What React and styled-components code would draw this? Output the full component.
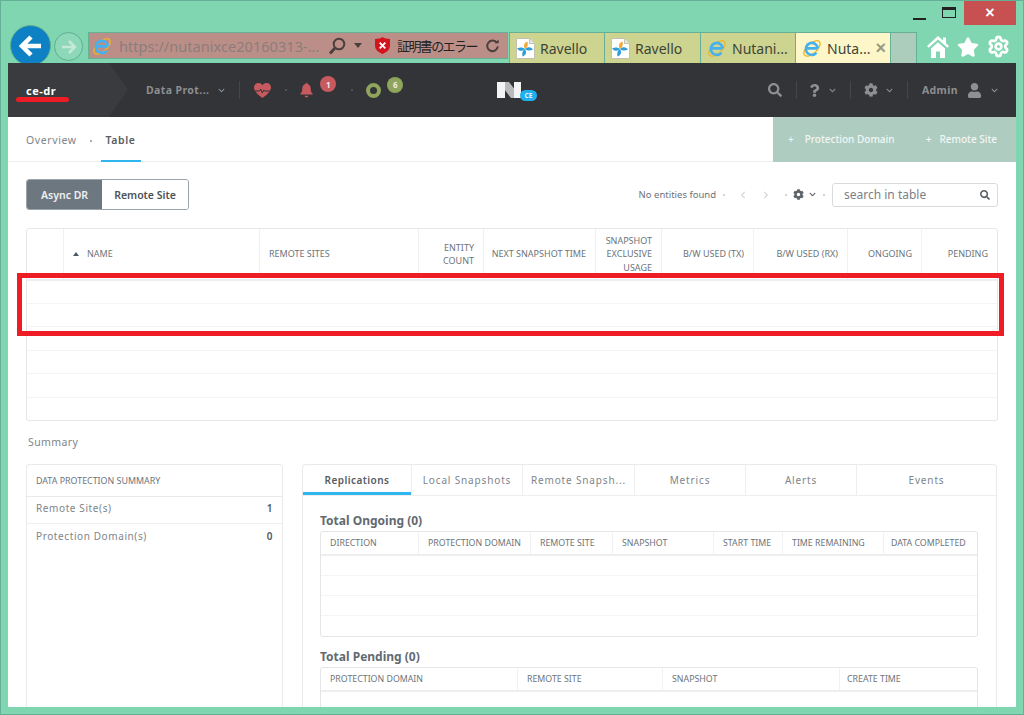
import React from 'react';
import styled, { createGlobalStyle } from 'styled-components';
import { FaStar, FaCog, FaSearch, FaUser, FaQuestion, FaChevronDown, FaChevronLeft, FaChevronRight } from 'react-icons/fa';
import { Settings } from 'lucide-react';

const Global = createGlobalStyle`
  html, body { margin: 0; padding: 0; height: 100%; overflow: hidden; }
  body { font-family: "Noto Sans", "Liberation Sans", "Noto Sans CJK JP", sans-serif; color: #4f5860; }
  * { box-sizing: border-box; }
`;

// icon with a left margin, used everywhere in the bars
const Glyph = styled.svg`
  flex-shrink: 0;
  margin-left: ${p => p.$l || 0}px;
`;

const Chevron = styled(FaChevronDown)`
  flex-shrink: 0;
  margin-left: ${p => p.$l || 0}px;
`;

const PagerLeft = styled(FaChevronLeft)`
  color: #d3d6d8;
  margin-left: 14px;
`;

const PagerRight = styled(FaChevronRight)`
  color: #d3d6d8;
  margin-left: 15px;
`;

const TableCog = styled(FaCog)`
  color: #5c6369;
`;

const TableChevron = styled(Chevron)`
  color: #5c6369;
`;

const IeIcon = ({ size = 20 }) => (
  <Glyph width={size} height={size} viewBox="0 0 24 24">
    <ellipse cx="12" cy="12.5" rx="12" ry="6" transform="rotate(-42 12 12.5)" fill="none" stroke="#f0b429" strokeWidth="1.5" />
    <path d="M5.5 12.5h13M19 12.5a7.2 7.2 0 1 0-1.6 5.2" fill="none" stroke="#45b1ee" strokeWidth="3.2" />
  </Glyph>
);

const RavelloIcon = () => (
  <Glyph width="19" height="21" viewBox="0 0 19 21">
    <path d="M.5.5h13l5 5v15H.5Z" fill="#fff" stroke="#c2c2ae" />
    <path d="M13.5.5v5h5" fill="#e8e8e0" stroke="#c2c2ae" />
    <path d="M9 11C7 7.500 8 5 11.500 3.500c.5 3 .5 5.500-2.500 7.500Z" fill="#f2a93b" />
    <path d="M9 11c3-2.500 5.500-2.500 8 .5-3 1.500-5.500 1.500-8-.5Z" fill="#2f9ed8" />
    <path d="M9 11c2 3.500 1 6-2.500 7.500C6 15.500 6 13 9 11Z" fill="#2f9ed8" />
    <path d="M9 11c-3 2.500-5.500 2.500-8-.5 3-1.500 5.500-1.500 8 .5Z" fill="#2f9ed8" />
  </Glyph>
);

const Window = styled.div`
  width: 1024px;
  height: 715px;
  position: relative;
  background: #80d6b0;
  border: 1px solid #63b096;
  padding: 0 7px 7px;
  display: flex;
  flex-direction: column;
  overflow: hidden;
`;

const TitleBar = styled.div`
  height: 18px;
  display: flex;
  justify-content: flex-end;
  align-items: flex-start;
  flex-shrink: 0;
`;

const WinButton = styled.div`
  width: ${p => (p.$close ? '52px' : '30px')};
  height: ${p => (p.$close ? '24px' : '20px')};
  background: ${p => (p.$close ? '#c75050' : 'transparent')};
  color: #fff;
  display: flex;
  align-items: center;
  justify-content: center;
  font-size: 16px;
  font-weight: 700;
  font-family: "Liberation Sans", sans-serif;
`;

const Minimize = styled.span`
  width: 13px;
  height: 2px;
  background: #222;
  margin-top: 16px;
`;

const Maximize = styled.span`
  width: 14px;
  height: 11px;
  border: 1px solid #222;
  border-top-width: 3px;
  margin-top: 3px;
`;

const ToolBar = styled.div`
  height: 31px;
  margin-top: 13px;
  display: flex;
  align-items: flex-start;
  flex-shrink: 0;
`;

const BackButton = styled.div`
  width: 41px;
  height: 41px;
  margin: -7px 0 0 2px;
  border-radius: 50%;
  background: #0d81c4;
  border: 1px solid #5fae92;
  display: flex;
  align-items: center;
  justify-content: center;
  flex-shrink: 0;
`;

const ForwardButton = styled.div`
  width: 29px;
  height: 29px;
  margin: 0 5px 0 3px;
  border-radius: 50%;
  border: 1px solid #5fae92;
  background: #8cd8b8;
  color: #c5e8d8;
  display: flex;
  align-items: center;
  justify-content: center;
  flex-shrink: 0;
`;

const AddressBar = styled.div`
  width: 420px;
  height: 27px;
  margin-right: 1px;
  padding: 0 3px;
  background: #bb8f88;
  border: 1px solid #66b095;
  display: flex;
  align-items: center;
  flex-shrink: 0;
`;

const UrlText = styled.span`
  font-size: 14.6px;
  color: #8b7d7a;
  margin-left: 7px;
  width: 200px;
  white-space: nowrap;
  overflow: hidden;
  flex-shrink: 0;
`;

const CertText = styled.span`
  font-size: 13px;
  color: #222;
  margin-left: 7px;
  width: 80px;
  white-space: nowrap;
  letter-spacing: -1.6px;
  font-family: "Noto Sans CJK JP", sans-serif;
  flex-shrink: 0;
`;

const Tab = styled.div`
  width: ${p => p.$w}px;
  height: 31px;
  background: ${p => (p.$active ? '#fcf6c8' : '#cdd48f')};
  border: 1px solid #66b095;
  border-left-width: ${p => (p.$first ? '1px' : '0')};
  border-bottom: none;
  padding-left: 6px;
  display: flex;
  align-items: center;
  gap: 5px;
  font-size: 14px;
  color: #3d4438;
  white-space: nowrap;
  flex-shrink: 0;
`;

const TabClose = styled.span`
  color: #9a9a84;
  font-size: 18px;
  font-weight: 700;
  font-family: "Liberation Sans", sans-serif;
`;

const EmptyTab = styled.div`
  width: 26px;
  height: 31px;
  background: #accdbc;
  border: 1px solid #66b095;
  border-left: none;
  border-bottom: none;
  flex-shrink: 0;
`;

const ToolIcons = styled.div`
  display: flex;
  align-items: center;
  gap: 8px;
  margin-left: 10px;
  color: #fff;
  padding-top: 3px;
  flex-shrink: 0;
`;

const Page = styled.div`
  flex: 1;
  min-height: 0;
  background: #fff;
  display: flex;
  flex-direction: column;
  overflow: hidden;
`;

const Header = styled.header`
  height: 54px;
  background: #333437;
  display: grid;
  grid-template-columns: 1fr auto 1fr;
  align-items: center;
  flex-shrink: 0;
  color: #8d8f92;
`;

const HeaderLeft = styled.div`
  display: flex;
  align-items: center;
  height: 100%;
`;

const HeaderRight = styled.div`
  display: flex;
  align-items: center;
  justify-content: flex-end;
  padding-right: 18px;
`;

const Crumb = styled.div`
  width: 120px;
  height: 100%;
  background: #3a3b3e;
  clip-path: polygon(0 0, 101px 0, 120px 50%, 101px 100%, 0 100%);
  color: #fff;
  font-size: 11px;
  font-weight: 700;
  letter-spacing: 0.5px;
  display: flex;
  align-items: center;
  padding: 0 0 0 18px;
  flex-shrink: 0;
`;

const NavItem = styled.div`
  display: flex;
  align-items: center;
  gap: ${p => p.$gap || 8}px;
  margin-left: ${p => p.$l || 0}px;
  font-size: 10.5px;
  font-weight: 700;
  letter-spacing: 0.4px;
  color: #8d8f92;
  white-space: nowrap;
`;

const Divider = styled.span`
  width: 1px;
  height: 18px;
  background: #44464a;
  margin: 0 ${p => p.$r || 14}px 0 14px;
`;

const Dot = styled.span`
  width: 2px;
  height: 2px;
  border-radius: 50%;
  background: #5a5b5e;
  margin: 0 ${p => p.$r || 14}px 0 ${p => p.$m || 14}px;
  flex-shrink: 0;
`;

const Alert = styled.div`
  display: flex;
  align-items: flex-start;
`;

const Badge = styled.span`
  width: 16px;
  height: 16px;
  border-radius: 50%;
  background: ${p => p.$c};
  color: #f2e8e8;
  font-size: 8px;
  font-weight: 700;
  display: flex;
  align-items: center;
  justify-content: center;
  margin: -6px 0 0 6px;
`;

const Ring = styled.span`
  width: 15px;
  height: 15px;
  border-radius: 50%;
  border: 4px solid #8fa45c;
  display: block;
`;

const Logo = styled.div`
  display: flex;
  align-items: center;
  margin-left: 10px;
`;

const CeBadge = styled.span`
  width: 17px;
  height: 11px;
  border-radius: 6px;
  background: #1fb0ee;
  color: #e4f6ff;
  font-size: 6.5px;
  font-weight: 700;
  display: flex;
  align-items: center;
  justify-content: center;
  margin: 11px 0 0 -1px;
`;

const SubNav = styled.div`
  height: 45px;
  border-bottom: 1px solid #eceeef;
  display: flex;
  justify-content: space-between;
  flex-shrink: 0;
  font-size: 10.5px;
`;

const SubTabs = styled.div`
  display: flex;
  align-items: stretch;
  padding-left: 18px;
`;

const SubTab = styled.div`
  display: flex;
  align-items: center;
  padding: 3px ${p => (p.$active ? '5px' : '0')} 0;
  font-weight: ${p => (p.$active ? 600 : 400)};
  letter-spacing: 0.6px;
  color: ${p => (p.$active ? '#585e63' : '#7e858b')};
  border-bottom: 2px solid ${p => (p.$active ? '#2fb6ef' : 'transparent')};
  margin-bottom: -1px;
`;

const SubDot = styled.span`
  width: 2px;
  height: 2px;
  background: #8c9298;
  border-radius: 50%;
  align-self: center;
  margin: 3px 9px 0 13px;
`;

const CreateBar = styled.div`
  width: 243px;
  background: #aeccc0;
  color: #f2f7f5;
  display: flex;
  align-items: center;
  padding: 0 19px 2px 15px;
  justify-content: space-between;
  font-size: 10px;
  font-weight: 500;
  margin-bottom: -1px;
`;

const CreateItem = styled.span`
  display: flex;
  gap: ${p => p.$gap}px;
  white-space: nowrap;
`;

const Content = styled.div`
  flex: 1;
  min-height: 0;
  padding: 17px 18px 0;
  display: flex;
  flex-direction: column;
`;

const ToolRow = styled.div`
  display: flex;
  justify-content: space-between;
  align-items: center;
  height: 31px;
  flex-shrink: 0;
`;

const Toggle = styled.div`
  display: flex;
  height: 31px;
  width: 163px;
  border: 1px solid #9aa3aa;
  border-radius: 3px;
  overflow: hidden;
  font-size: 10.5px;
  font-weight: 600;
`;

const ToggleItem = styled.div`
  flex: ${p => p.$grow};
  display: flex;
  align-items: center;
  justify-content: center;
  background: ${p => (p.$active ? '#6d7780' : '#fff')};
  color: ${p => (p.$active ? '#eef0f2' : '#4d5358')};
`;

const TableTools = styled.div`
  display: flex;
  align-items: center;
  font-size: 9.5px;
  color: #6b7379;
`;

const ToolDot = styled.span`
  width: 2px;
  height: 2px;
  background: #c3c7ca;
  border-radius: 50%;
  margin: 0 ${p => p.$r}px 0 ${p => p.$l}px;
`;

const SearchBox = styled.div`
  width: 166px;
  height: 24px;
  border: 1px solid #d8dbdd;
  border-radius: 3px;
  display: flex;
  align-items: center;
  justify-content: space-between;
  padding: 0 7px 0 11px;
  font-size: 12px;
  color: #7a8188;
`;

const TableCard = styled.div`
  height: 193px;
  margin-top: 18px;
  border: 1px solid #e4e6e8;
  border-radius: 3px;
  flex-shrink: 0;
  overflow: hidden;
`;

const Cols = styled.div`
  display: grid;
  grid-template-columns: ${p => p.$cols};
  height: ${p => p.$h}px;
  border-bottom: 2px solid #eceeef;
`;

const HeadCell = styled.div`
  display: flex;
  align-items: center;
  justify-content: ${p => (p.$right ? 'flex-end' : 'flex-start')};
  text-align: ${p => (p.$right ? 'right' : 'left')};
  gap: 8px;
  padding: 0 9px;
  font-size: 9px;
  line-height: 13.5px;
  color: #6c747a;
  border-right: 1px solid #f0f1f2;
  white-space: pre;
  &:last-child { border-right: none; }
`;

const SortArrow = styled.span`
  width: 0;
  height: 0;
  border-left: 3px solid transparent;
  border-right: 3px solid transparent;
  border-bottom: 4px solid #4f5860;
`;

const BlankRow = styled.div`
  height: ${p => p.$h}px;
  border-bottom: 1px solid #f3f4f5;
  &:last-child { border-bottom: none; }
`;

const SummaryTitle = styled.div`
  margin: 14px 0 0 2px;
  height: 14px;
  font-size: 10.5px;
  letter-spacing: 0.4px;
  color: #7e858b;
  flex-shrink: 0;
`;

const Bottom = styled.div`
  display: grid;
  grid-template-columns: 257px 695px;
  gap: 19px;
  margin-top: 15px;
  flex: 1;
  min-height: 0;
`;

const Panel = styled.section`
  border: 1px solid #e8eaeb;
  border-bottom: none;
  border-radius: 4px 4px 0 0;
  overflow: hidden;
`;

const PanelTitle = styled.div`
  height: 32px;
  padding-left: 9px;
  display: flex;
  align-items: center;
  border-bottom: 1px solid #e8eaeb;
  font-size: 8.9px;
  color: #6c747a;
`;

const StatRow = styled.div`
  height: 27px;
  padding: 0 9px 4px 9px;
  display: flex;
  align-items: center;
  justify-content: space-between;
  border-bottom: ${p => (p.$last ? 'none' : '1px solid #eceeef')};
  font-size: 10px;
  letter-spacing: 0.6px;
  color: #7e858b;
`;

const StatValue = styled.strong`
  color: #4f5860;
  font-weight: 600;
`;

const TabRow = styled.div`
  display: grid;
  grid-template-columns: 109px 111px 112px 111px 111px 1fr;
  height: 31px;
  border-bottom: 1px solid #eceeef;
`;

const PanelTab = styled.div`
  display: flex;
  align-items: center;
  justify-content: center;
  font-size: 10px;
  letter-spacing: ${p => (p.$active ? '0.45px' : '0.85px')};
  font-weight: ${p => (p.$active ? 600 : 400)};
  color: ${p => (p.$active ? '#555c62' : '#7e858b')};
  border-right: 1px solid #eceeef;
  box-shadow: ${p => (p.$active ? 'inset 0 -3px 0 #2fb6ef' : 'none')};
  white-space: nowrap;
  &:last-child { border-right: none; }
`;

const PanelBody = styled.div`
  padding: 16px 18px 0 17px;
`;

const SectionTitle = styled.h3`
  margin: 0;
  height: 19px;
  font-size: 12px;
  line-height: 18px;
  font-weight: 700;
  color: #626a70;
`;

const InnerTable = styled.div`
  border: 1px solid #e4e6e8;
  border-radius: 3px;
  margin-bottom: 11px;
  overflow: hidden;
`;

const InnerHead = styled(HeadCell)`
  padding-top: 2px;
  font-size: 8.8px;
  white-space: nowrap;
  &:last-child { padding-left: 7px; padding-right: 6px; }
`;

const BlankInner = styled.div`
  height: 20px;
  border-bottom: 1px solid #f3f4f5;
  &:last-child { border-bottom: none; }
`;

// the red marks somebody drew on top of the screenshot
const Annotation = styled.div`
  position: absolute;
  left: 16px;
  top: 272px;
  width: 987px;
  height: 63px;
  border: 5px solid #ee1c25;
  pointer-events: none;
`;

const Underline = styled.div`
  position: absolute;
  left: 15px;
  top: 96px;
  width: 53px;
  height: 5px;
  border-radius: 3px;
  background: #ee1c25;
`;

const mainCols = '37px 196px 159px 65px 112px 66px 92px 94px 74px 1fr';
const ongoingCols = '98px 112px 82px 101px 69px 101px 1fr';
const pendingCols = '197px 145px 177px 1fr';

const App = () => {
  return (
    <>
      <Global />
      <Window>
        <TitleBar>
          <WinButton><Minimize /></WinButton>
          <WinButton><Maximize /></WinButton>
          <WinButton $close>×</WinButton>
        </TitleBar>
        <ToolBar>
          <BackButton>
            <svg width="24" height="22" viewBox="0 0 24 22"><path d="M12 2 3 11l9 9M4 11h18" fill="none" stroke="#fff" strokeWidth="4.5" /></svg>
          </BackButton>
          <ForwardButton>
            <svg width="16" height="14" viewBox="0 0 16 14"><path d="M8 1l6 6-6 6M13 7H1" fill="none" stroke="currentColor" strokeWidth="2.6" /></svg>
          </ForwardButton>
          <AddressBar>
            <IeIcon size={20} />
            <UrlText>https://nutanixce20160313-...</UrlText>
            <Glyph $l={9} width="18" height="18" viewBox="0 0 18 18"><circle cx="11" cy="7" r="5.300" fill="none" stroke="#4a3f3c" strokeWidth="2" /><path d="M7 11 2 16.500" stroke="#4a3f3c" strokeWidth="2.800" /></Glyph>
            <Glyph $l={8} width="8" height="5" viewBox="0 0 8 5"><path d="M0 0h8L4 5Z" fill="#4a3f3c" /></Glyph>
            <Glyph $l={13} width="15" height="17" viewBox="0 0 16 18"><path d="M8 0c2 1.500 5 2 8 2v7c0 4-3 7-8 9-5-2-8-5-8-9V2c3 0 6-.5 8-2Z" fill="#d4141c" /><path d="M5 6l6 6M11 6l-6 6" stroke="#fff" strokeWidth="2" /></Glyph>
            <CertText>証明書のエラー</CertText>
            <Glyph $l={8} width="15" height="16" viewBox="0 0 17 17"><path d="M13.500 5a6 6 0 1 0 1 4" fill="none" stroke="#4a3f3c" strokeWidth="2.200" /><path d="M11 5.500h4.500V1Z" fill="#4a3f3c" /></Glyph>
          </AddressBar>
          <Tab $w={96} $first><RavelloIcon />Ravello</Tab>
          <Tab $w={96}><RavelloIcon />Ravello</Tab>
          <Tab $w={95}><IeIcon />Nutani...</Tab>
          <Tab $w={95} $active><IeIcon />Nuta...<TabClose>×</TabClose></Tab>
          <EmptyTab />
          <ToolIcons>
            <svg width="22" height="22" viewBox="0 0 22 22" fill="#fff">
              <path d="M11 0 0 10l1.600 1.800L11 3.400l9.400 8.400L22 10l-3-2.700V1.500h-3v3Z" />
              <path d="M4 12.500 11 6.300l7 6.200V22h-5v-6.500H9V22H4Z" />
            </svg>
            <FaStar size={22} />
            <Settings size={23} strokeWidth={2.8} />
          </ToolIcons>
        </ToolBar>
        <Page>
          <Header>
            <HeaderLeft>
              <Crumb>ce-dr</Crumb>
              <NavItem $l={18}>Data Prot...<Chevron size={7} $l={1} /></NavItem>
              <Divider />
              <svg width="17" height="15" viewBox="0 0 17 15">
                <path d="M8.500 15C3 11 0 8 0 4.500 0 2 2 0 4.500 0 6.200 0 7.600.8 8.500 2.200 9.400.8 10.800 0 12.500 0 15 0 17 2 17 4.500 17 8 14 11 8.500 15Z" fill="#c65a5f" />
                <path d="M.5 8h5l1.200-2 1.600 4 1.400-3 .8 1h6" fill="none" stroke="#333437" strokeWidth="1" />
              </svg>
              <Dot $m={14} $r={12} />
              <Alert>
                <svg width="15" height="16" viewBox="0 0 16 16" fill="#c65a5f">
                  <path d="M8 .5c.8 0 1.200.6 1.200 1.200 2.400.6 3.300 2.600 3.300 5 0 3 1 4.600 2.500 6H1c1.500-1.400 2.500-3 2.500-6 0-2.400.9-4.400 3.300-5C6.800 1.100 7.200.5 8 .5Z" />
                  <path d="M6 14.200h4l-.6 1.600H6.600Z" />
                </svg>
                <Badge $c="#c65a5f">1</Badge>
              </Alert>
              <Dot $m={15} $r={13} />
              <Alert>
                <Ring />
                <Badge $c="#8fa45c">6</Badge>
              </Alert>
            </HeaderLeft>
            <Logo>
              <svg width="24" height="16" viewBox="0 0 24 16">
                <path d="M7 0h5l7 9v7h-5L7 7Z" fill="#b9babb" />
                <path d="M0 0h8v16H0Z" fill="#f4f4f4" />
                <path d="M17 0h7v16h-7Z" fill="#f4f4f4" />
              </svg>
              <CeBadge>CE</CeBadge>
            </Logo>
            <HeaderRight>
              <FaSearch size={14} />
              <Divider $r={11} />
              <NavItem $gap={8}><FaQuestion size={13} /><Chevron size={7} /></NavItem>
              <Divider $r={13} />
              <NavItem><FaCog size={14} /><Chevron size={7} /></NavItem>
              <Divider />
              <NavItem $gap={9}>Admin<FaUser size={15} /><Chevron size={7} /></NavItem>
            </HeaderRight>
          </Header>
          <SubNav>
            <SubTabs>
              <SubTab>Overview</SubTab>
              <SubDot />
              <SubTab $active>Table</SubTab>
            </SubTabs>
            <CreateBar>
              <CreateItem $gap={11}><span>+</span>Protection Domain</CreateItem>
              <CreateItem $gap={8}><span>+</span>Remote Site</CreateItem>
            </CreateBar>
          </SubNav>
          <Content>
            <ToolRow>
              <Toggle>
                <ToggleItem $active $grow={76}>Async DR</ToggleItem>
                <ToggleItem $grow={87}>Remote Site</ToggleItem>
              </Toggle>
              <TableTools>
                No entities found
                <ToolDot $l={7} $r={0} />
                <PagerLeft size={8} />
                <PagerRight size={8} />
                <ToolDot $l={15} $r={6} />
                <TableCog size={11} />
                <TableChevron size={7} $l={5} />
                <ToolDot $l={7} $r={7} />
                <SearchBox>search in table<FaSearch size={10} color="#555c62" /></SearchBox>
              </TableTools>
            </ToolRow>
            <TableCard>
              <Cols $cols={mainCols} $h={52}>
                <HeadCell />
                <HeadCell><SortArrow />NAME</HeadCell>
                <HeadCell>REMOTE SITES</HeadCell>
                <HeadCell $right>{'ENTITY\nCOUNT'}</HeadCell>
                <HeadCell $right>NEXT SNAPSHOT TIME</HeadCell>
                <HeadCell $right>{'SNAPSHOT\nEXCLUSIVE\nUSAGE'}</HeadCell>
                <HeadCell $right>B/W USED (TX)</HeadCell>
                <HeadCell $right>B/W USED (RX)</HeadCell>
                <HeadCell $right>ONGOING</HeadCell>
                <HeadCell $right>PENDING</HeadCell>
              </Cols>
              {[23, 23, 24, 23, 24, 23].map((h, i) => <BlankRow key={i} $h={h} />)}
            </TableCard>
            <SummaryTitle>Summary</SummaryTitle>
            <Bottom>
              <Panel>
                <PanelTitle>DATA PROTECTION SUMMARY</PanelTitle>
                <StatRow>Remote Site(s)<StatValue>1</StatValue></StatRow>
                <StatRow $last>Protection Domain(s)<StatValue>0</StatValue></StatRow>
              </Panel>
              <Panel>
                <TabRow>
                  <PanelTab $active>Replications</PanelTab>
                  <PanelTab>Local Snapshots</PanelTab>
                  <PanelTab>Remote Snapsh...</PanelTab>
                  <PanelTab>Metrics</PanelTab>
                  <PanelTab>Alerts</PanelTab>
                  <PanelTab>Events</PanelTab>
                </TabRow>
                <PanelBody>
                  <SectionTitle>Total Ongoing (0)</SectionTitle>
                  <InnerTable>
                    <Cols $cols={ongoingCols} $h={24}>
                      <InnerHead>DIRECTION</InnerHead>
                      <InnerHead>PROTECTION DOMAIN</InnerHead>
                      <InnerHead>REMOTE SITE</InnerHead>
                      <InnerHead>SNAPSHOT</InnerHead>
                      <InnerHead>START TIME</InnerHead>
                      <InnerHead>TIME REMAINING</InnerHead>
                      <InnerHead>DATA COMPLETED</InnerHead>
                    </Cols>
                    {[0, 1, 2, 3].map(i => <BlankInner key={i} />)}
                  </InnerTable>
                  <SectionTitle>Total Pending (0)</SectionTitle>
                  <InnerTable>
                    <Cols $cols={pendingCols} $h={24}>
                      <InnerHead>PROTECTION DOMAIN</InnerHead>
                      <InnerHead>REMOTE SITE</InnerHead>
                      <InnerHead>SNAPSHOT</InnerHead>
                      <InnerHead>CREATE TIME</InnerHead>
                    </Cols>
                    {[0, 1].map(i => <BlankInner key={i} />)}
                  </InnerTable>
                </PanelBody>
              </Panel>
            </Bottom>
          </Content>
        </Page>
        <Annotation />
        <Underline />
      </Window>
    </>
  );
};

export default App;
